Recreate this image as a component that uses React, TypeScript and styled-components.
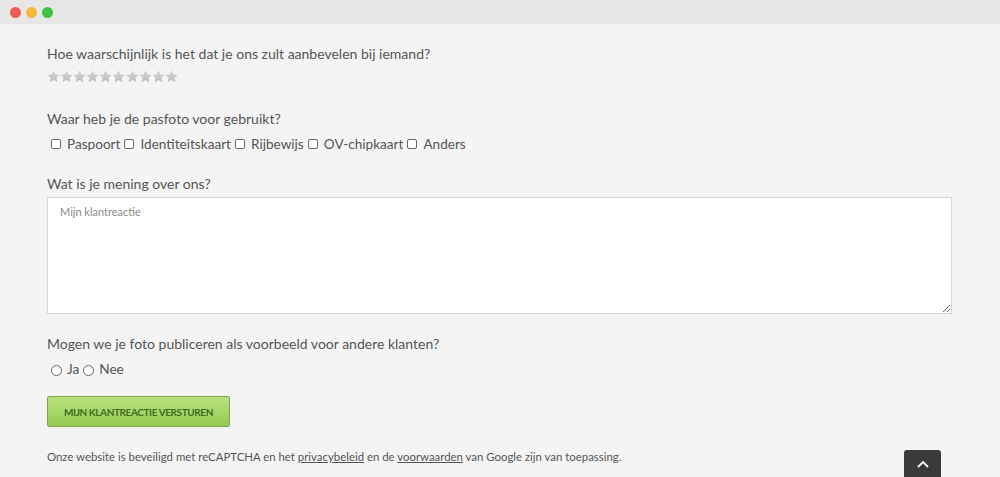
import React from "react";
import styled, { createGlobalStyle } from "styled-components";

const GlobalStyle = createGlobalStyle`
  html, body {
    margin: 0;
    padding: 0;
    background: #f4f4f4;
    font-family: Lato, "Liberation Sans", sans-serif;
    color: #555;
    overflow: hidden;
  }
`;

const Window = styled.div`
  width: 1000px;
  height: 477px;
  background: #f4f4f4;
  position: relative;
  overflow: hidden;
`;

const TitleBar = styled.div`
  height: 24px;
  background: #e7e7e7;
  display: flex;
  align-items: center;
  gap: 5px;
  padding-left: 10px;
`;

const Dot = styled.span<{ color: string }>`
  width: 11px;
  height: 11px;
  border-radius: 50%;
  background: ${(p) => p.color};
`;

const Content = styled.div`
  padding: 20px 48px 0 47px;
`;

const Question = styled.div<{ tight?: boolean }>`
  font-size: 14px;
  line-height: 20px;
  color: #555;
  margin-bottom: ${(p) => (p.tight ? 3 : 5)}px;
`;

const Section = styled.div<{ gap?: number }>`
  margin-bottom: ${(p) => p.gap ?? 22}px;
`;

const Stars = styled.div`
  display: flex;
  height: 14px;
  margin-top: 6px;
`;

const Options = styled.div`
  display: flex;
  align-items: center;
  font-size: 13.6px;
  line-height: 20px;
  color: #555;
`;

const Option = styled.label`
  display: flex;
  align-items: center;
`;

const Check = styled.input`
  appearance: none;
  width: 10px;
  height: 10px;
  border: 1px solid #666;
  border-radius: 2px;
  background: #fff;
  margin: 0 6px 0 4px;
`;

const Radio = styled.input`
  appearance: none;
  width: 11px;
  height: 11px;
  border: 1px solid #666;
  border-radius: 50%;
  background: #fff;
  margin: 3px 5px 0 4px;
`;

const TextArea = styled.textarea`
  display: block;
  box-sizing: border-box;
  width: 100%;
  height: 117px;
  border: 1px solid #d6d6d6;
  background: #fff;
  padding: 7px 12px;
  font-family: Lato, "Liberation Sans", sans-serif;
  font-size: 11px;
  color: #555;
  resize: vertical;
  &::placeholder {
    color: #8a8a8a;
  }
`;

const Button = styled.button`
  height: 31px;
  width: 183px;
  border: 1px solid #7da84a;
  border-radius: 2px;
  background: linear-gradient(#b9e27f, #93cb52);
  color: #3f6a20;
  font-family: Lato, "Liberation Sans", sans-serif;
  font-weight: 700;
  font-size: 10px;
  text-transform: uppercase;
  letter-spacing: -0.4px;
  padding: 0;
`;

const Footer = styled.p`
  font-size: 11.4px;
  line-height: 14px;
  color: #555;
  margin: 23px 0 0;
  a {
    color: #555;
    text-decoration: underline;
  }
`;

const ScrollTop = styled.div`
  position: absolute;
  left: 904px;
  top: 450px;
  width: 37px;
  height: 40px;
  background: #3a3a3a;
  border-radius: 3px;
  display: flex;
  justify-content: center;
  padding-top: 10px;
  box-sizing: border-box;
`;

const Star = () => (
  <svg width="13.1" height="13" viewBox="1 1.5 22 21">
    <defs>
      <linearGradient id="sg" x1="0" y1="0" x2="0" y2="1">
        <stop offset="0" stopColor="#d6d6d6" />
        <stop offset="1" stopColor="#bcbcbc" />
      </linearGradient>
    </defs>
    <path
      d="M12 1.5l3.1 7 7.4.7-5.6 5 1.7 7.4L12 17.8l-6.6 3.8 1.7-7.4-5.6-5 7.4-.7z"
      fill="url(#sg)"
    />
  </svg>
);

export default function App() {
  const kinds = ["Paspoort", "Identiteitskaart", "Rijbewijs", "OV-chipkaart", "Anders"];
  return (
    <Window>
      <GlobalStyle />
      <TitleBar>
        <Dot color="#ee5c56" />
        <Dot color="#f4b83b" />
        <Dot color="#3ec440" />
      </TitleBar>
      <Content>
        <Section gap={25}>
          <Question>Hoe waarschijnlijk is het dat je ons zult aanbevelen bij iemand?</Question>
          <Stars>
            {Array.from({ length: 10 }).map((_, i) => (
              <Star key={i} />
            ))}
          </Stars>
        </Section>
        <Section gap={20}>
          <Question>Waar heb je de pasfoto voor gebruikt?</Question>
          <Options>
            {kinds.map((k) => (
              <Option key={k}>
                <Check type="checkbox" />
                {k}
              </Option>
            ))}
          </Options>
        </Section>
        <Section gap={20}>
          <Question tight>Wat is je mening over ons?</Question>
          <TextArea placeholder="Mijn klantreactie" />
        </Section>
        <Section gap={17}>
          <Question>Mogen we je foto publiceren als voorbeeld voor andere klanten?</Question>
          <Options>
            <Option>
              <Radio type="radio" name="pub" />
              Ja
            </Option>
            <Option>
              <Radio type="radio" name="pub" />
              Nee
            </Option>
          </Options>
        </Section>
        <Button>Mijn klantreactie versturen</Button>
        <Footer>
          Onze website is beveiligd met reCAPTCHA en het <a>privacybeleid</a> en de{" "}
          <a>voorwaarden</a> van Google zijn van toepassing.
        </Footer>
      </Content>
      <ScrollTop>
        <svg width="12" height="8" viewBox="0 0 12 8">
          <path d="M1 7l5-5 5 5" stroke="#fff" strokeWidth="1.8" fill="none" />
        </svg>
      </ScrollTop>
    </Window>
  );
}
